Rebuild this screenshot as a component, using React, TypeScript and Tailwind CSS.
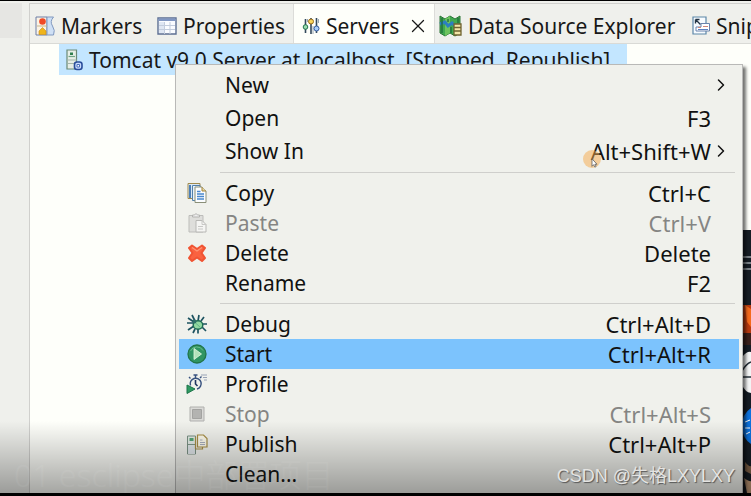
import React from "react";
import clsx from "clsx";
import { ChevronRight, X } from "lucide-react";

type MenuEntry = {
  label: string;
  shortcut?: string;
  icon?: React.ReactNode;
  submenu?: boolean;
  disabled?: boolean;
  active?: boolean;
};

function MarkersIcon() {
  return (
    <svg viewBox="0 0 20 20" className="size-5 shrink-0" aria-hidden="true">
      <path d="M1 1h11v18H1z" fill="#fbf3e4" stroke="#6d7ea6" />
      <path d="M12 1h6.500q-4 4.500-1 9t1 9H12z" fill="#cfe0f5" stroke="#8199bf" />
      <path d="M2 10h10" stroke="#c9b58c" />
      <circle cx="7.500" cy="5.500" r="3.300" fill="#f04a26" />
      <path d="M4 18.500v-3.500l3.500-3.500L11 15v3.500z" fill="#efb51c" stroke="#c88b17" strokeWidth=".6" />
    </svg>
  );
}

function PropertiesIcon() {
  return (
    <svg viewBox="0 0 20 18" className="h-[18px] w-5 shrink-0" aria-hidden="true">
      <path d="M1 1h18v16H1z" fill="#fafcff" stroke="#5d6f93" strokeWidth="1.400" />
      <path d="M1.500 1.500h17v2.500h-17z" fill="#8197c2" />
      <path d="M2 5h5v11H2z" fill="#dfe7f3" />
      <path d="M7.500 5v12M13 5v12M2 8.500h16M2 12.500h16" stroke="#c3cddd" />
    </svg>
  );
}

function ServersIcon() {
  return (
    <svg viewBox="0 0 18 18" className="size-[18px] shrink-0" fill="none" aria-hidden="true">
      <path d="M3.500 2v14M9 1v16M14.500 1v15" stroke="#34495c" strokeWidth="1.600" />
      <path d="M5.500 2v3M11 9v8M16.500 2v4" stroke="#9aa7b3" />
      <circle cx="3.500" cy="10" r="2.300" fill="#9bdcae" stroke="#21734c" />
      <circle cx="9" cy="4.500" r="2.500" fill="#f8d45d" stroke="#9a6c18" />
      <circle cx="14.500" cy="11.500" r="2.500" fill="#a8cdfa" stroke="#315a9e" />
    </svg>
  );
}

function DataSourceIcon() {
  return (
    <svg viewBox="0 0 23 22" className="h-[22px] w-[23px] shrink-0" aria-hidden="true">
      <path d="M1 1l5 3 5-3 5 3 5-3v17l-5 3-5-3-5 3-5-3z" fill="#40a850" stroke="#2a7535" />
      <path d="M6 4l5-3v17l-5 3z" fill="#6cc35e" />
      <path d="M1 9l5-2 3 4 4-3 4 4" fill="none" stroke="#2b7fc0" strokeWidth="3" />
      <path d="M3 3v15M9 4v3M12 12v6M19 3v5" stroke="#1d6b3a" strokeWidth="1.300" />
      <path d="M15 9h7v11h-7z" fill="#f3e6a8" stroke="#6f6330" strokeWidth="1.300" />
      <path d="M15 12.500h7M15 16h7" stroke="#6f6330" strokeWidth="1.300" />
    </svg>
  );
}

function SnippetsIcon() {
  return (
    <svg viewBox="0 0 18 19" className="h-[19px] w-[18px] shrink-0" aria-hidden="true">
      <path d="M1 1h13v17H1z" fill="#f7fbff" stroke="#5c87a8" strokeWidth="1.200" />
      <path d="M3.500 3.500h4M3.500 3.500v4M3.500 3.500l5 5" stroke="#223344" strokeWidth="1.400" fill="none" />
      <path d="M9 7.500h8.500V15H4v-4h5z" fill="#fff" stroke="#6983ad" />
      <path d="M6 11.500h3M11 10.500h5" stroke="#d08578" />
      <path d="M6 13.500h10" stroke="#5b80c0" />
    </svg>
  );
}

function TomcatIcon() {
  return (
    <svg viewBox="0 0 18 22" className="h-[22px] w-[18px] shrink-0" aria-hidden="true">
      <path d="M2 1h9.500v19H2z" fill="#e6eee6" stroke="#6b8a76" strokeWidth="1.200" />
      <path d="M3.500 7.500h6.500" stroke="#6fa584" strokeWidth="1.200" />
      <path d="M5 3.500h3v2.500H5z" fill="#2f7f50" />
      <path d="M2 11h9.500M3 14.500h8" stroke="#a3b5aa" />
      <rect x="9.500" y="13" width="7.500" height="7.500" rx="2.500" fill="#c7dafc" stroke="#294d9a" strokeWidth="1.600" />
      <path d="M12 15.500h2.500V18H12z" fill="#fff" stroke="#4a70bd" />
    </svg>
  );
}

function CopyIcon() {
  return (
    <svg viewBox="0 0 20 22" className="h-[22px] w-5" aria-hidden="true">
      <path d="M1 1.500h12v15H1z" fill="#dbe8f3" stroke="#a08a4e" />
      <path d="M3 3v13" stroke="#4d80b8" strokeWidth="2" />
      <path d="M5.500 3.500H13v15H5.500z" fill="#e9f3fb" stroke="#5480a8" />
      <path d="M8 5h7l4 4v11.500H8z" fill="#fbfdff" stroke="#8a8f78" />
      <path d="M15 5v4h4" fill="#e8d8a3" stroke="#a3843c" />
      <path d="M10 9.500h3.500M10 12h7M10 14.500h7M10 17h7" stroke="#4a88cd" strokeWidth="1.300" />
    </svg>
  );
}

function PasteIcon() {
  return (
    <svg viewBox="0 0 20 22" className="h-[22px] w-5" aria-hidden="true">
      <path d="M2 3.500h14V20H2z" fill="#dededb" stroke="#bdbdba" />
      <path d="M5.500 5V3h2q1.500-3 3 0h2v2z" fill="#eee" stroke="#b3b3b0" />
      <path d="M9 8.500h6l4 4V20H9z" fill="#f5f5f3" stroke="#b8b8b5" />
      <path d="M15 8.500v4h4M11 14.500h5M11 17h5" fill="none" stroke="#c8c8c5" />
    </svg>
  );
}

function DeleteIcon() {
  return (
    <svg viewBox="0 0 20 20" className="size-5" aria-hidden="true">
      <path
        d="M5 2.500l5 3.500 5-3.500L18 5l-3.500 5 3.500 5-3 3-5-3.500L5 18l-3-3 3.500-5L2 5z"
        fill="#fa6240"
        stroke="#f05433"
        strokeWidth="2"
        strokeLinejoin="round"
      />
      <path d="M5 4.500l5 3.500 5-3.500" fill="none" stroke="#ff9373" strokeWidth="1.400" />
    </svg>
  );
}

function DebugIcon() {
  return (
    <svg viewBox="0 0 22 20" className="h-5 w-[22px]" fill="none" aria-hidden="true">
      <path
        d="M6 1l3 6M13 1l-1 6M2 4l6 4M1 9h6M2 16l6-4M7 19l2-4M12 19.500V15M15 7l3-4M15 10h6M16 13l4 4"
        stroke="#1d5360"
        strokeWidth="1.700"
      />
      <ellipse cx="12" cy="11" rx="4.800" ry="4.300" fill="#91d9a1" stroke="#1e6b54" strokeWidth="1.500" />
      <path d="M9.500 9l5 4.500" stroke="#62b488" />
      <circle cx="8.500" cy="7.500" r="2" fill="#2e6f68" />
    </svg>
  );
}

function StartIcon() {
  return (
    <svg viewBox="0 0 20 20" className="size-5" aria-hidden="true">
      <circle cx="10" cy="10" r="9" fill="#309563" stroke="#217448" strokeWidth="1.300" />
      <path d="M3.500 7a7 7 0 0 1 12.500-.500" fill="none" stroke="#69bc8b" />
      <path d="M7 4.500v11l7.500-5.500z" fill="#b4e3bb" stroke="#e4f7e2" strokeWidth=".8" />
    </svg>
  );
}

function ProfileIcon() {
  return (
    <svg viewBox="0 0 22 20" className="h-5 w-[22px]" fill="none" aria-hidden="true">
      <path d="M7.500 1h4M9.500 1v3M14 4l1.500-1.500M4.500 4.500L3 3" stroke="#38527f" strokeWidth="1.400" />
      <path d="M4.500 11.500A5.500 5.500 0 1 1 11 15" stroke="#38527f" strokeWidth="1.500" />
      <path d="M9.500 6v4l2 2" stroke="#1f3560" strokeWidth="1.600" />
      <path d="M15 1h6M17 3.500h4M18 6h3" stroke="#9aa4b6" />
      <path d="M1 11v8.500L9 15z" fill="#2f9a62" stroke="#1b7448" />
    </svg>
  );
}

function StopIcon() {
  return (
    <svg viewBox="0 0 16 16" className="size-4" aria-hidden="true">
      <path d="M1 1h14v14H1z" fill="#dadad7" stroke="#b0b0ae" />
      <path d="M3.500 3.500h9v9h-9z" fill="#b3b3b1" stroke="#a3a3a1" />
    </svg>
  );
}

function PublishIcon() {
  return (
    <svg viewBox="0 0 22 21" className="h-[21px] w-[22px]" aria-hidden="true">
      <path d="M1.500 2h8v18h-8z" fill="#e4ebe6" stroke="#7a9184" />
      <path d="M3.500 4h4v3h-4z" fill="#55a474" />
      <path d="M2 10.500h7" stroke="#7f9788" />
      <path d="M2 11.500h7V20H2z" fill="#dfe5e9" />
      <path d="M9.500 15h7v-3" fill="none" stroke="#a68d45" strokeWidth="1.200" />
      <path d="M11.500 1h6L21 4.500V13h-9.500z" fill="#fcf9ea" stroke="#a68d45" strokeWidth="1.200" />
      <path d="M9.500 3v12" stroke="#a68d45" strokeWidth="1.200" />
      <path d="M14 6h2.500M14 8.500h5M14 10.500h5" stroke="#a8aebc" />
    </svg>
  );
}

const tabs = [
  { label: "Markers", icon: <MarkersIcon />, className: "pl-[5px] w-[122px]" },
  { label: "Properties", icon: <PropertiesIcon />, className: "pl-[5px] w-[141px]" },
  { label: "Servers", icon: <ServersIcon />, className: "pl-2 w-[142px]", active: true },
  { label: "Data Source Explorer", icon: <DataSourceIcon />, className: "pl-1 w-[252px]" },
  { label: "Snippets", icon: <SnippetsIcon />, className: "pl-[5px] w-[130px]" },
];

const groups: MenuEntry[][] = [
  [
    { label: "New", submenu: true },
    { label: "Open", shortcut: "F3" },
    { label: "Show In", shortcut: "Alt+Shift+W", submenu: true },
  ],
  [
    { label: "Copy", shortcut: "Ctrl+C", icon: <CopyIcon /> },
    { label: "Paste", shortcut: "Ctrl+V", icon: <PasteIcon />, disabled: true },
    { label: "Delete", shortcut: "Delete", icon: <DeleteIcon /> },
    { label: "Rename", shortcut: "F2" },
  ],
  [
    { label: "Debug", shortcut: "Ctrl+Alt+D", icon: <DebugIcon /> },
    { label: "Start", shortcut: "Ctrl+Alt+R", icon: <StartIcon />, active: true },
    { label: "Profile", icon: <ProfileIcon /> },
    { label: "Stop", shortcut: "Ctrl+Alt+S", icon: <StopIcon />, disabled: true },
    { label: "Publish", shortcut: "Ctrl+Alt+P", icon: <PublishIcon /> },
    { label: "Clean..." },
  ],
];

function MenuItem({ entry, tall }: { entry: MenuEntry; tall: boolean }) {
  return (
    <button
      type="button"
      role="menuitem"
      disabled={entry.disabled}
      className={clsx(
        "flex w-full items-center text-left",
        tall ? "h-[33px]" : "h-[30px]",
        entry.active && "bg-[#7cc3fd]",
        entry.disabled ? "text-[#858583]" : "text-[#111]"
      )}
    >
      <span className="flex w-9 shrink-0 justify-center">{entry.icon}</span>
      <span className="ml-[10px] flex-1">{entry.label}</span>
      <span className="text-[22px]">{entry.shortcut}</span>
      <span className="flex w-7 shrink-0">
        {entry.submenu ? <ChevronRight className="size-5" strokeWidth={1.800} /> : null}
      </span>
    </button>
  );
}

function ContextMenu() {
  return (
    <div
      role="menu"
      className="absolute top-[63px] right-2 bottom-0 left-[175px] overflow-hidden border border-b-0 border-[#b9b9b7] bg-[#f0f1ec] px-[3px] pt-[3px] shadow-[3px_3px_3px_rgba(0,0,0,0.55)]"
    >
      {groups.map((group, i) => (
        <React.Fragment key={i}>
          {i > 0 ? <div role="separator" className="my-[5px] mr-1 ml-[41px] h-px bg-[#cfcfcc]" /> : null}
          {group.map((entry) => (
            <MenuItem key={entry.label} entry={entry} tall={i === 0} />
          ))}
        </React.Fragment>
      ))}
    </div>
  );
}

// sliver of the desktop that shows past the window edge
function Wallpaper() {
  return (
    <svg
      viewBox="0 0 12 263"
      preserveAspectRatio="none"
      className="absolute right-0 bottom-0 h-[263px] w-3"
      aria-hidden="true"
    >
      <path d="M0 0h12v263H0z" fill="#161d25" />
      <path d="M4 27h8M4 33h8M4 39h8" stroke="#9ba1a6" strokeWidth="1.500" />
      <path d="M4 75h8v28H4z" fill="#b83a10" />
      <path d="M6 75l6 4v18l-4-5z" fill="#f4691c" />
      <path d="M4 103h8v12H4z" fill="#3a201b" />
      <path d="M3 127q5-6 9-5v41q-6-1-9-8z" fill="#f3f4f4" />
      <path d="M3 141q4-7 9-9M3 147h9" stroke="#263039" strokeWidth="1.500" fill="none" />
      <path d="M12 178q-9 6-9 18t9 18z" fill="#0d72dd" />
      <path d="M6 192l5-2M6 198h5M7 204l4-2" stroke="#fff" />
      <path d="M6 232q4 5 6 4v8l-6-3z" fill="#816349" />
      <path d="M5 248q6 4 7 3v12H8z" fill="#c39b78" />
    </svg>
  );
}

function Pointer() {
  return (
    <div className="absolute top-[149px] right-[150px] flex size-[18px] items-center justify-center rounded-full bg-[#f5a94a]/50">
      <svg viewBox="0 0 8 12" className="mt-2 ml-1 h-[10px] w-[7px] shrink-0" aria-hidden="true">
        <path d="M1 1v9l2-2 1.500 3 1.500-1-1.500-2.500H7z" fill="#fff" stroke="#555" strokeWidth=".9" />
      </svg>
    </div>
  );
}

export default function App() {
  return (
    <div className="h-screen overflow-hidden border-t border-b-[3px] border-black bg-[#eff0ec] font-['Noto_Sans','Noto_Sans_CJK_SC',sans-serif] text-[21px] leading-7 text-[#181818]">
      <div className="relative flex h-full overflow-hidden pt-[2px]">
        <aside className="w-[29px] shrink-0 pr-[7px]">
          <div className="h-[35px] bg-[#e6e6e3]" />
        </aside>

        <main className="flex min-w-0 flex-1 flex-col border-t border-l border-[#d0d0cd]">
          <div role="tablist" className="flex h-10 shrink-0 overflow-hidden border-b border-[#d9dad6]">
            {tabs.map((tab) => (
              <div
                key={tab.label}
                className={clsx(
                  "flex shrink-0 items-center",
                  tab.className,
                  tab.active && "border-x border-[#dcdcd9] bg-[#fefffa]"
                )}
              >
                <button
                  type="button"
                  role="tab"
                  aria-selected={!!tab.active}
                  className="flex items-center gap-[6px] whitespace-nowrap pt-1"
                >
                  {tab.icon}
                  {tab.label}
                </button>
                {tab.active ? (
                  <button type="button" aria-label="Close Servers" className="ml-2 pt-1">
                    <X className="size-[22px]" strokeWidth={1.400} />
                  </button>
                ) : null}
              </div>
            ))}
          </div>

          <div className="flex-1 bg-[#fefffa] pl-[29px]">
            <div className="flex h-[31px] w-[568px] items-center gap-[6px] bg-[#c3e6ff] pl-[6px] whitespace-nowrap">
              <TomcatIcon />
              <span>Tomcat v9.0 Server at localhost&nbsp; [Stopped, Republish]</span>
            </div>
          </div>
        </main>

        <Wallpaper />
        <ContextMenu />
        <Pointer />

        <div className="pointer-events-none absolute inset-x-0 bottom-0 h-[72px] bg-linear-to-b from-transparent to-black/35" />
        <p className="pointer-events-none absolute bottom-0 left-[14px] text-[32px] leading-9 font-light text-white/5">
          01 esclipse中部署项目
        </p>
        <p className="pointer-events-none absolute right-4 bottom-[3px] font-['Liberation_Sans','Noto_Sans_CJK_SC',sans-serif] text-[18px] leading-7 text-[#e4e4e2] [text-shadow:1px_1px_1px_#555]">
          CSDN @失格LXYLXY
        </p>
      </div>
    </div>
  );
}
